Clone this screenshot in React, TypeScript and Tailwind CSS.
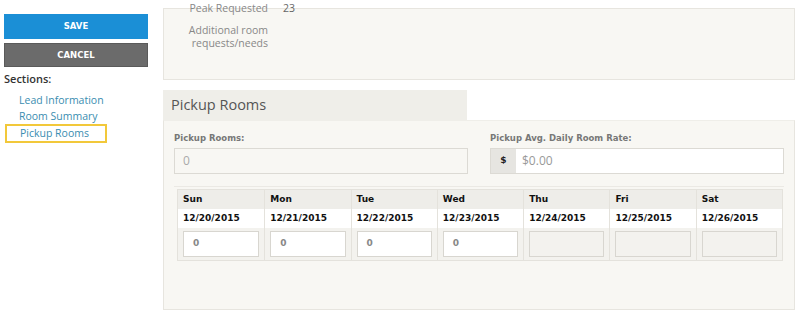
import React from 'react'

const days = [
  { name: 'Sun', date: '12/20/2015', value: '0' },
  { name: 'Mon', date: '12/21/2015', value: '0' },
  { name: 'Tue', date: '12/22/2015', value: '0' },
  { name: 'Wed', date: '12/23/2015', value: '0' },
  { name: 'Thu', date: '12/24/2015', value: null },
  { name: 'Fri', date: '12/25/2015', value: null },
  { name: 'Sat', date: '12/26/2015', value: null },
]

const heavy = "font-['DejaVu_Sans',sans-serif] font-bold"

const App = () => {
  return (
    <div className="relative w-[800px] h-[311px] overflow-hidden bg-white font-['Open_Sans',sans-serif]">
      <div className="flex">
        {/* sidebar */}
        <div className="w-[163px] shrink-0 pl-1 pt-[11px]">
          <button className={`w-[144px] h-[25px] bg-[#1b8fd6] text-white text-[8.5px] uppercase ${heavy}`}>
            Save
          </button>
          <button className={`mt-1 w-[144px] h-[24px] bg-[#6b6b6b] border border-[#5a5a5a] text-white text-[8.5px] uppercase ${heavy}`}>
            Cancel
          </button>
          <p className="mt-[4px] text-[11px] font-semibold text-[#333]">Sections:</p>
          <ul className="mt-[5px] text-[10.5px] text-[#3a8db0] leading-[16px]">
            <li className="pl-[15px]">Lead Information</li>
            <li className="pl-[15px]">Room Summary</li>
            <li className="ml-px w-[102px] border-2 border-[#f2c83a] pl-[13px] leading-[13px] py-px">
              Pickup Rooms
            </li>
          </ul>
        </div>

        {/* main */}
        <div className="w-[632px] shrink-0">
          <div className="mt-2 h-[72px] bg-[#f8f7f3] border border-[#e7e5df]">
            <div className="-mt-[7px] flex text-[10.5px] text-[#888]">
              <div className="w-[104px] text-right leading-[13px]">Peak Requested</div>
              <div className="pl-[15px] leading-[13px] text-[#666]">23</div>
            </div>
            <div className="mt-[9px] flex text-[10.5px] text-[#888]">
              <div className="w-[104px] text-right leading-[13px]">
                Additional room
                <br />
                requests/needs
              </div>
            </div>
          </div>

          <div className="mt-[10px] w-[304px] h-[30px] bg-[#efeee9] flex items-center pl-2 text-[14.5px] text-[#555]">
            Pickup Rooms
          </div>

          <div className="h-[190px] bg-[#f8f7f3] border border-[#e7e5df] border-t-[#efeee9] px-[10px] pt-[11px]">
            <div className="grid grid-cols-2 gap-[22px]">
              <div>
                <p className={`text-[8.5px] text-[#777] leading-[12px] ${heavy}`}>Pickup Rooms:</p>
                <div className="mt-[4px] h-[26px] border border-[#dcdad4] bg-[#f8f7f3] flex items-center pl-2 text-[12px] text-[#aaa]">
                  0
                </div>
              </div>
              <div>
                <p className={`text-[8.5px] text-[#777] leading-[12px] ${heavy}`}>Pickup Avg. Daily Room Rate:</p>
                <div className="mt-[4px] h-[26px] flex border border-[#dcdad4]">
                  <div className={`w-[25px] bg-[#e6e5e1] flex items-center justify-center text-[9px] text-[#222] ${heavy}`}>
                    $
                  </div>
                  <div className="flex-1 bg-white flex items-center pl-[6px] text-[12px] text-[#999]">$0.00</div>
                </div>
              </div>
            </div>

            <div className="mt-[12px] border-t border-[#ebe9e4] pt-[2px] px-[3px]">
              <div className="grid grid-cols-7 border border-[#e4e2dc] w-[606px]">
                {days.map((d, i) => (
                  <div key={d.name} className={`flex flex-col ${i > 0 ? 'border-l border-[#e4e2dc]' : ''}`}>
                    <div className={`h-[19px] bg-[#eeede9] flex items-center pl-[5px] text-[9px] text-[#111] ${heavy}`}>
                      {d.name}
                    </div>
                    <div className={`h-[19px] bg-white flex items-center pl-[5px] text-[9px] text-[#111] ${heavy}`}>
                      {d.date}
                    </div>
                    <div className="h-[32px] bg-[#f3f2ee] px-[5px] pt-[3px]">
                      <div
                        className={`h-[26px] border border-[#d8d6d0] flex items-center pl-[9px] text-[9px] text-[#888] ${heavy} ${
                          d.value === null ? 'bg-[#f3f2ee]' : 'bg-white'
                        }`}
                      >
                        {d.value}
                      </div>
                    </div>
                  </div>
                ))}
              </div>
            </div>
          </div>
        </div>
      </div>
    </div>
  )
}

export default App
